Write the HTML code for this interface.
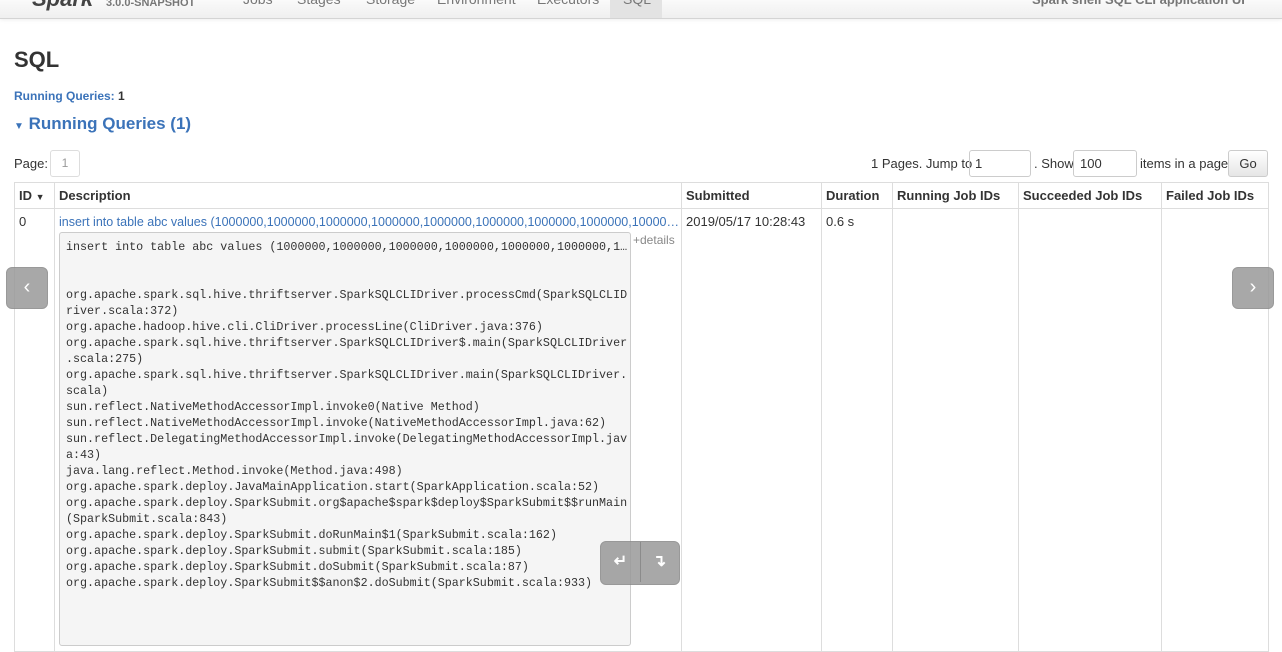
<!DOCTYPE html><html><head><style>
body{margin:0;width:1282px;height:583px;overflow:hidden;font-family:"Liberation Sans",sans-serif;font-size:13px;color:#333;background:#fff;position:relative}
.nav{position:absolute;left:0;top:0;width:1282px;height:18px;background:linear-gradient(#fafafa,#efefef);border-bottom:1px solid #d4d4d4;box-shadow:0 1px 4px rgba(0,0,0,.07)}
.nav span{position:absolute;top:-9px;font-size:14px;color:#777}
.a{color:#3b73b9;text-decoration:none}
table{position:absolute;left:14px;top:182px;border-collapse:collapse;width:1255px;table-layout:fixed}
td,th{border:1px solid #ddd;text-align:left;vertical-align:top;padding:5px 4px;font-size:13px;overflow:hidden}
th{height:15px}
pre{margin:3px 0 0 0;background:#f5f5f5;border:1px solid #ccc;border-radius:3px;width:558px;padding:6px 6px;font-family:"Liberation Mono",monospace;font-size:11.7px;line-height:16px;color:#333;white-space:pre;height:400px;overflow:hidden}
.btn{position:absolute;background:#999;opacity:.85;border:1px solid #888;border-radius:6px;color:#fff;font-size:20px;text-align:center}
</style></head><body>
<div class="nav">
<span style="left:32px;top:-14px;font-size:22px;font-weight:bold;color:#444;font-style:italic">Spark</span>
<span style="left:106px;top:-3px;font-size:11px;font-weight:bold;color:#777">3.0.0-SNAPSHOT</span>
<span style="left:243px">Jobs</span><span style="left:297px">Stages</span><span style="left:366px">Storage</span><span style="left:437px">Environment</span><span style="left:537px">Executors</span>
<div style="position:absolute;left:610px;top:0;width:52px;height:18px;background:#e3e3e3"></div><span style="left:623px">SQL</span>
<span style="left:1032px;font-weight:bold;font-size:13px;top:-8px">Spark shell SQL CLI application UI</span>
</div>
<div style="position:absolute;left:14px;top:47px;font-size:22px;font-weight:bold">SQL</div>
<div style="position:absolute;left:14px;top:89px;font-size:12px;font-weight:bold"><span class="a">Running Queries:</span> 1</div>
<div style="position:absolute;left:14px;top:114px;font-size:17px;color:#3b73b9;font-weight:bold"><span style="font-size:10px">&#9660;</span> Running Queries (1)</div>
<div style="position:absolute;left:14px;top:156px">Page:</div>
<div style="position:absolute;left:50px;top:150px;width:28px;height:25px;border:1px solid #ddd;border-radius:3px;color:#999;text-align:center;line-height:25px;font-size:12px">1</div>
<div style="position:absolute;left:871px;top:156px">1 Pages. Jump to</div>
<div style="position:absolute;left:969px;top:150px;border:1px solid #ccc;border-radius:3px;line-height:25px;padding-left:5px;box-sizing:border-box;width:62px;height:27px">1</div>
<div style="position:absolute;left:1034px;top:156px">. Show</div>
<div style="position:absolute;left:1073px;top:150px;border:1px solid #ccc;border-radius:3px;line-height:25px;padding-left:6px;box-sizing:border-box;width:64px;height:27px">100</div>
<div style="position:absolute;left:1140px;top:156px">items in a page.</div>
<div style="position:absolute;left:1228px;top:150px;width:40px;height:27px;box-sizing:border-box;border:1px solid #ccc;border-radius:3px;background:linear-gradient(#fff,#e6e6e6);text-align:center;line-height:25px">Go</div>
<table><colgroup><col style="width:40px"><col style="width:627px"><col style="width:140px"><col style="width:71px"><col style="width:126px"><col style="width:143px"><col></colgroup>
<tr><th>ID <span style="font-size:9px">&#9660;</span></th><th>Description</th><th>Submitted</th><th>Duration</th><th>Running Job IDs</th><th>Succeeded Job IDs</th><th>Failed Job IDs</th></tr>
<tr><td style="height:380px">0</td><td style="position:relative"><span class="a" style="font-size:12.5px;white-space:nowrap">insert into table abc values (1000000,1000000,1000000,1000000,1000000,1000000,1000000,1000000,10000…</span>
<span style="position:absolute;left:578px;top:24px;font-size:12px;color:#888">+details</span>
<pre>insert into table abc values (1000000,1000000,1000000,1000000,1000000,1000000,1…


org.apache.spark.sql.hive.thriftserver.SparkSQLCLIDriver.processCmd(SparkSQLCLID
river.scala:372)
org.apache.hadoop.hive.cli.CliDriver.processLine(CliDriver.java:376)
org.apache.spark.sql.hive.thriftserver.SparkSQLCLIDriver$.main(SparkSQLCLIDriver
.scala:275)
org.apache.spark.sql.hive.thriftserver.SparkSQLCLIDriver.main(SparkSQLCLIDriver.
scala)
sun.reflect.NativeMethodAccessorImpl.invoke0(Native Method)
sun.reflect.NativeMethodAccessorImpl.invoke(NativeMethodAccessorImpl.java:62)
sun.reflect.DelegatingMethodAccessorImpl.invoke(DelegatingMethodAccessorImpl.jav
a:43)
java.lang.reflect.Method.invoke(Method.java:498)
org.apache.spark.deploy.JavaMainApplication.start(SparkApplication.scala:52)
org.apache.spark.deploy.SparkSubmit.org$apache$spark$deploy$SparkSubmit$$runMain
(SparkSubmit.scala:843)
org.apache.spark.deploy.SparkSubmit.doRunMain$1(SparkSubmit.scala:162)
org.apache.spark.deploy.SparkSubmit.submit(SparkSubmit.scala:185)
org.apache.spark.deploy.SparkSubmit.doSubmit(SparkSubmit.scala:87)
org.apache.spark.deploy.SparkSubmit$$anon$2.doSubmit(SparkSubmit.scala:933)</pre></td>
<td>2019/05/17 10:28:43</td><td>0.6 s</td><td></td><td></td><td></td></tr></table>
<div class="btn" style="left:6px;top:267px;width:40px;height:40px;line-height:38px">&#8249;</div>
<div class="btn" style="left:1232px;top:267px;width:40px;height:40px;line-height:38px">&#8250;</div>
<div class="btn" style="left:600px;top:541px;width:78px;height:42px;line-height:40px;font-size:16px;font-weight:bold"><span style="display:inline-block;width:38px;border-right:1px solid #777">&#8629;</span><span style="display:inline-block;width:38px">&#8628;</span></div>
</body></html>
